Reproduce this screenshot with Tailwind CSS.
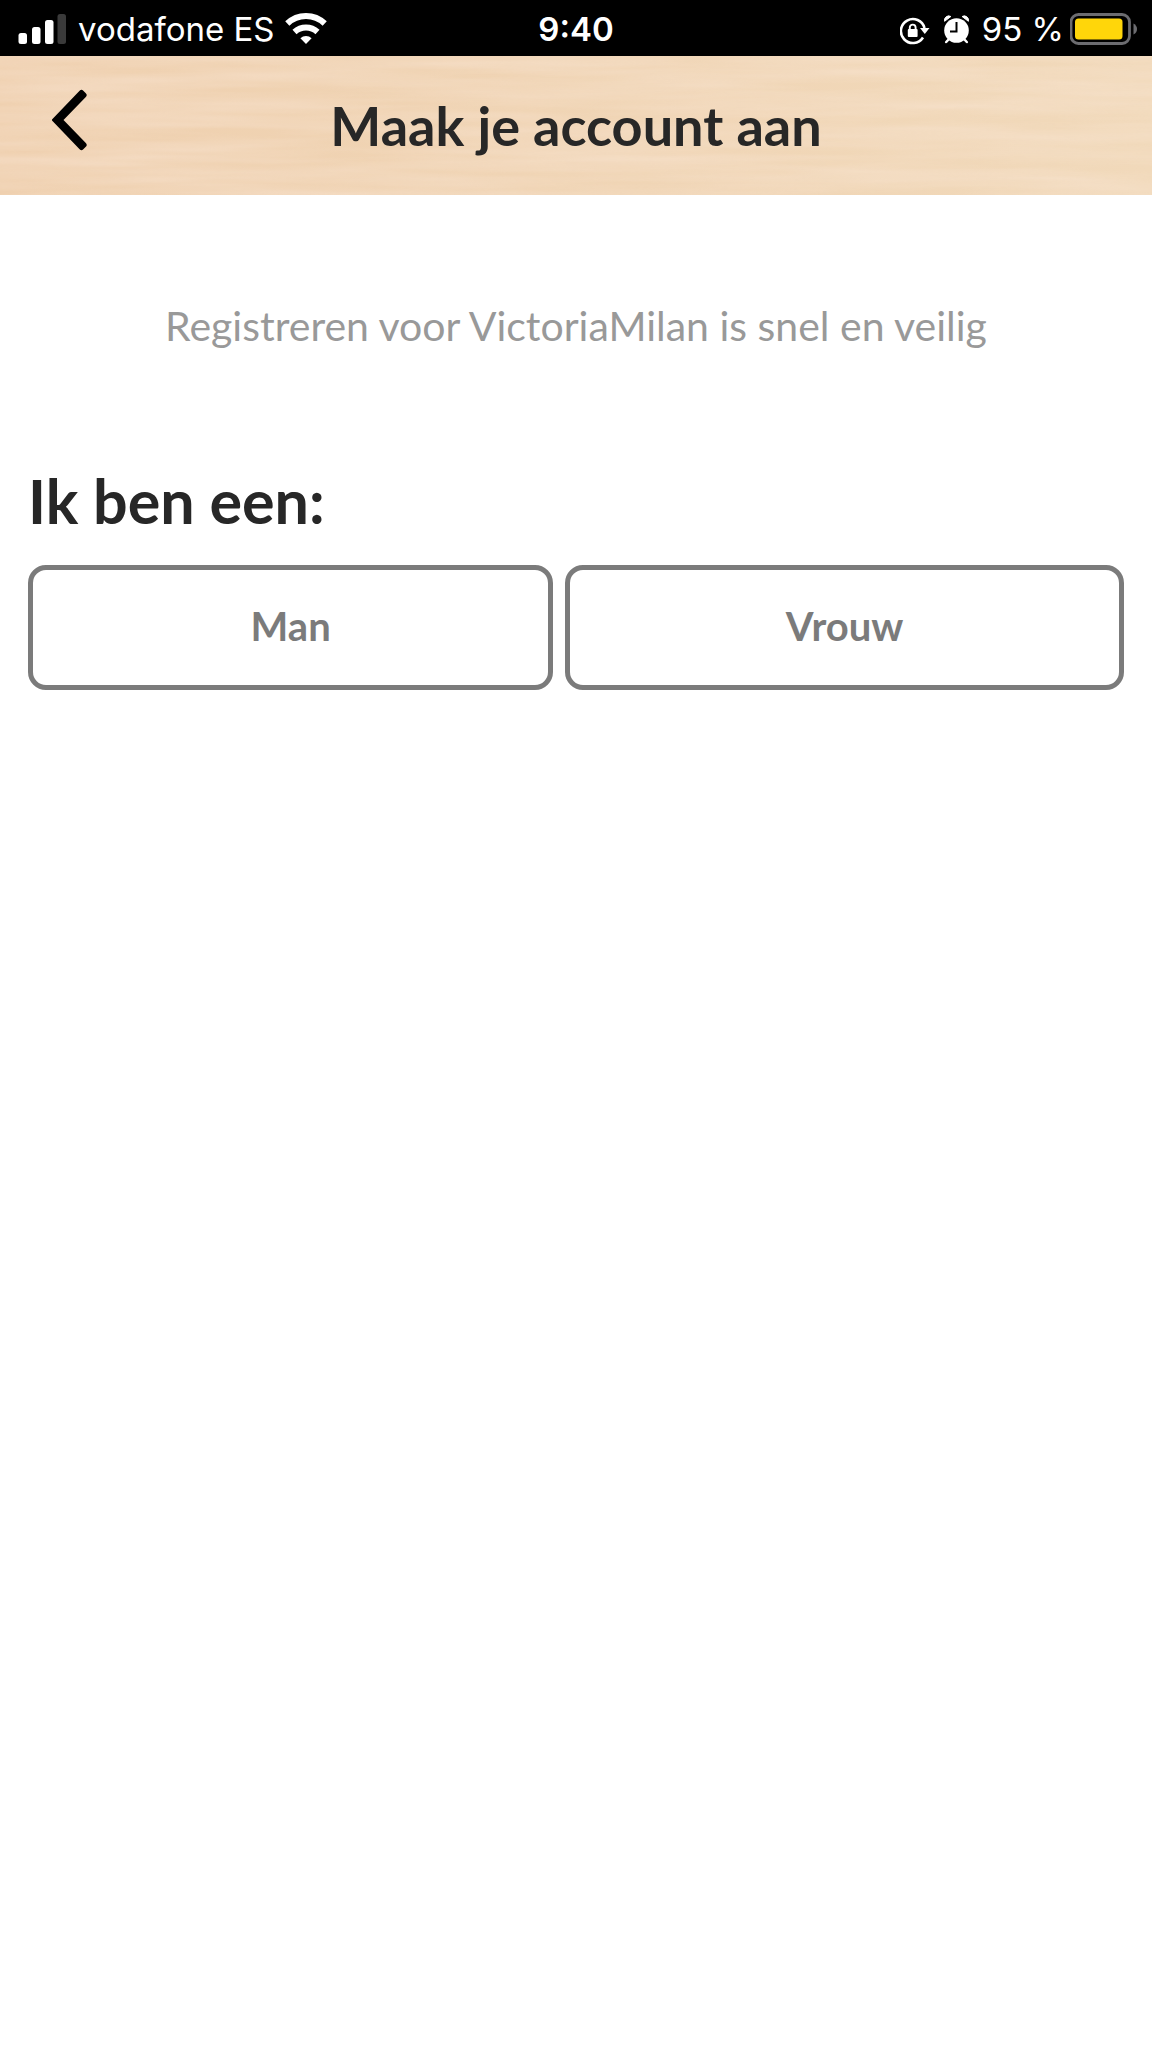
<!DOCTYPE html>
<html lang="nl">
<head>
<meta charset="utf-8">
<meta name="viewport" content="width=device-width, initial-scale=1">
<title>Maak je account aan</title>
<script src="https://cdn.jsdelivr.net/npm/@tailwindcss/browser@4"></script>
</head>
<body class="min-h-screen bg-white font-['Lato',sans-serif] text-[#272727]">
  <div class="grid h-14 grid-cols-[1fr_auto_1fr] items-center bg-black px-[14px] font-['Inter',sans-serif] text-[33px] leading-[58px] text-white">
    <div class="flex items-center">
      <svg class="h-14 w-[52px] shrink-0" viewBox="14 0 52 56" fill="#fff" aria-hidden="true">
        <rect x="18.500" y="32" width="8.500" height="11" rx="2.500"/>
        <rect x="32" y="26" width="8.500" height="17" rx="2.500"/>
        <rect x="45" y="19" width="8.500" height="24" rx="2.500"/>
        <rect x="57.500" y="13" width="8.500" height="30" rx="2.500" fill="#3a3a3a"/>
      </svg>
      <span class="ml-3 whitespace-nowrap">vodafone ES</span>
      <svg class="ml-2.5 h-14 w-[42px] shrink-0" viewBox="285 0 42 56" aria-hidden="true">
        <g fill="none" stroke="#fff" stroke-width="6">
          <path d="M287.300 22.500a27 27 0 0 1 37.400 0"/>
          <path d="M294.500 31a17 17 0 0 1 23 0"/>
        </g>
        <path d="M306 43l-5.600-5.800a8.500 8.500 0 0 1 11.200 0z" fill="#fff"/>
      </svg>
    </div>
    <time class="font-semibold">9:40</time>
    <div class="flex items-center justify-end">
      <svg class="h-14 w-[70px] shrink-0" viewBox="899 0 70 56" aria-hidden="true">
        <path d="M923.500 27a12 12 0 1 0-1.500 9.500" fill="none" stroke="#fff" stroke-width="2.600"/>
        <path d="M919 27h9.500l-4.700 6z" fill="#fff"/>
        <rect x="906.800" y="28" width="9.800" height="8" rx="1" fill="#fff"/>
        <path d="M908.800 29v-2.500a2.900 2.900 0 0 1 5.800 0V29" fill="none" stroke="#fff" stroke-width="1.900"/>
        <circle cx="955.500" cy="29.500" r="12.300" fill="#fff"/>
        <path d="M943.600 20.300a4.300 4.300 0 0 1 6.300-4.800zM967.400 20.300a4.300 4.300 0 0 0-6.300-4.800z" fill="#fff" stroke="#fff" stroke-width="1"/>
        <path d="M948.500 37.500l-3.300 3.500M962.500 37.500l3.300 3.500" stroke="#fff" stroke-width="2.500" stroke-linecap="round"/>
        <path d="M955.500 21v9.500h-6.500" fill="none" stroke="#000" stroke-width="2"/>
      </svg>
      <span class="ml-3 whitespace-nowrap">95 %</span>
      <svg class="ml-1.5 h-14 w-[68px] shrink-0" viewBox="1070 0 68 56" aria-hidden="true">
        <rect x="1071" y="13.500" width="58.500" height="29" rx="7.500" fill="none" stroke="#6c6c70" stroke-width="2.800"/>
        <rect x="1075" y="17.500" width="47.500" height="21" rx="3.500" fill="#ffd60a"/>
        <path d="M1133.500 22.500q3.500 2 3.500 5.500t-3.500 5.500z" fill="#6c6c70"/>
      </svg>
    </div>
  </div>

  <header class="relative isolate grid h-[139px] grid-cols-[1fr_auto_1fr] items-center overflow-hidden bg-linear-to-r from-[#efd0af] to-[#f1d9ba] px-8">
    <!-- wood grain -->
    <svg class="absolute inset-0 -z-10 h-full w-full opacity-50" aria-hidden="true">
      <filter id="grain" x="0" y="0" width="100%" height="100%">
        <feTurbulence type="fractalNoise" baseFrequency="0.004 0.07" numOctaves="3" seed="7"/>
        <feColorMatrix values="0 0 0 0 0.97  0 0 0 0 0.83  0 0 0 0 0.74  1.300 0 0 0 -0.350"/>
      </filter>
      <rect width="100%" height="100%" filter="url(#grain)"/>
    </svg>
    <button type="button" aria-label="Terug" class="flex w-20 items-center pb-3 pl-5">
      <svg class="h-16 w-9 shrink-0" viewBox="52 88 36 64" aria-hidden="true">
        <path d="M51.600 120L79.600 90.700a2.600 2.600 0 0 1 3.700 0l2.500 2.500a2.600 2.600 0 0 1 0 3.700L63.500 120l22.300 23.100a2.600 2.600 0 0 1 0 3.700l-2.500 2.500a2.600 2.600 0 0 1-3.700 0z"/>
      </svg>
    </button>
    <h1 class="text-center text-[54px] leading-[60px] font-bold whitespace-nowrap">Maak je account aan</h1>
  </header>

  <main class="px-7 pt-[107px]">
    <p class="text-center text-[41px] leading-12 text-[#999]">Registreren voor VictoriaMilan is snel en veilig</p>
    <form class="mt-[115px]">
      <fieldset>
        <legend class="text-[61px] leading-[72px] font-bold">Ik ben een:</legend>
        <div class="mt-7 grid grid-cols-[47fr_50fr] gap-3">
          <button type="button" class="h-[125px] rounded-[18px] border-[5px] border-[#7b7b7b] pb-1 text-[40px] font-bold text-[#7b7b7b]">Man</button>
          <button type="button" class="h-[125px] rounded-[18px] border-[5px] border-[#7b7b7b] pb-1 text-[40px] font-bold text-[#7b7b7b]">Vrouw</button>
        </div>
      </fieldset>
    </form>
  </main>
</body>
</html>
